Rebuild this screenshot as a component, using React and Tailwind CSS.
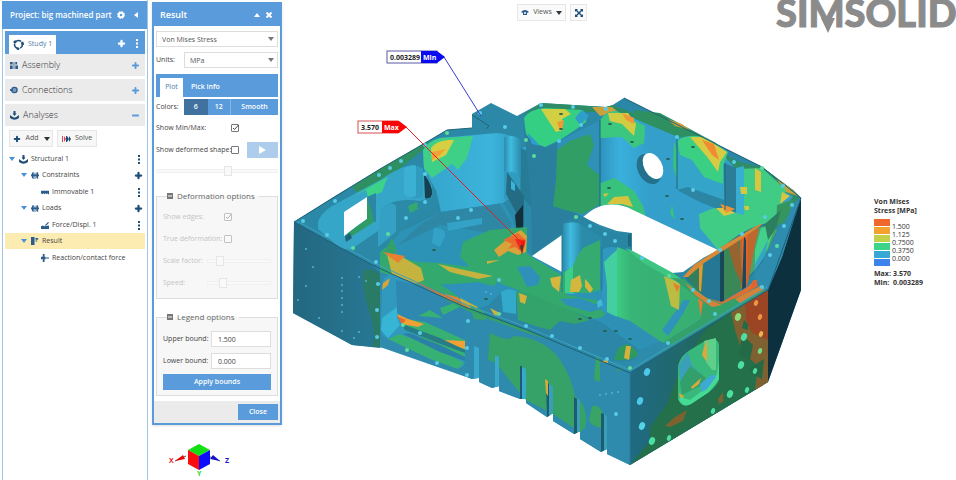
import { Plus, Minus } from "lucide-react";

// [fill, path] pairs, painted back to front
const body = [
  ["#2b88a6", "M294 222L335 196L380 169L425 143L447 130L472 128V114L491 103L517 116L541 103L606 107L613 105L624 98L762 167L793 190L801 198V290L768 382L630 465L607 454V449L601 452L580 439V431L574 434L553 421V413L547 417L526 403V398L520 399L499 391V386L492 388L479 382V377L472 379L388 346V348L352 345L293 313Z"],
  ["url(#leftWall)", "M294 222L370 264L380 272V348L352 345L293 313Z"],
  ["#2a7b66", "M363 271Q370 267 380 274V347H373Q376 328 369 311Q362 290 363 271Z"],
  ["#2e8bae", "M380 270L465 308L527 330L630 373V465L607 454V449L601 452L580 439V431L574 434L553 421V413L547 417L526 403V398L520 399L499 391V386L492 388L479 382V377L472 379L380 347Z"],
  ["#0d303e", "M768 290L782 257L801 198V290L768 382Z"],
  // rim bands
  ["#2e9060", "M352 187L380 169L425 143L432 141L420 152L398 170L372 190L360 196Z"],
  ["#2e8d66", "M606 107L613 105L640 108L700 137L762 167L793 190L800 197L795 203L755 180L730 168H700L678 137L640 118L608 112H560L541 107L519 117L541 103Z"],
  ["#2b87a8", "M624 98L762 167L740 162L700 143L660 123L613 105Z"],
  ["#2e9060", "M634 110L660 113L716 143L728 158L700 146L650 127L634 118Z"],
  ["#c9a13a", "M592 107H612L618 112L600 116ZM667 119L682 124L690 130L675 126ZM775 177L790 188L798 196L786 192Z"],
];

const leftPocket = [
  ["#36a6c8", "M318 222Q320 214 332 206L380 180Q402 165 415 165Q425 170 432 186L436 198L412 208L350 250L340 248L318 229Z"],
  ["#3cd287", "M355 195L380 181L388 177L386 181L382 192L368 198L366 190Z"],
  ["#2f9bbd", "M404 168Q416 163 423 169V197Q414 200 404 194Z"],
  ["#3bb0d2", "M404 168Q412 164 416 166V196Q408 199 404 194Z"],
  ["#16404f", "M424 174Q433 186 432 194Q431 200 425 198Z"],
  ["#2a8aa8", "M432 172L441 192L438 205L413 222L392 240L381 247L372 242L382 228V208Q396 197 420 201L432 197Z"],
  ["#34a1c4", "M381 208Q392 200 396 206V232L378 247V232Z"],
  ["#fff", "M344 212L367 197V219L357 226L344 236Z"],
  ["#2b87a4", "M367 197L376 193V222L367 220Z"],
  ["#2f9c66", "M367 198L371 210L374 222L360 231L345 240L348 233L367 219Z"],
  ["#1f6478", "M345 236L350 233L352 238L346 242Z"],
  ["#35a870", "M408 206L417 202L418 209L410 213Z"],
];

const mainPocket = [
  ["url(#pocket)", "M423 152Q426 141 440 138L497 133Q515 135 520 142V190L503 203L441 212L436 190L424 170Z"],
  ["#3fd088", "M423 150Q427 142 440 138L473 136L467 158L458 170L452 164L432 178L424 168Z"],
  ["#d7cf42", "M431 148Q436 141 448 140L454 140L446 155L432 162Z"],
  ["#f3a034", "M432 152L446 149L440 155L432 160Z"],
  ["url(#column)", "M504 137Q514 134 521 140V178L514 172L504 171Z"],
  ["#2f9bbf", "M504 171L520 177V202L504 199Z"],
  ["#267c97", "M521 149L531 152V207L521 195Z"],
  ["#32a9cf", "M530 159L541 158V166L531 167ZM522 148L532 144L540 147L530 152Z"],
  ["#236c84", "M507 172L524 196V223L520 246L517 214L506 194Z"],
  ["#132f3a", "M515 215L523 205V248L518 246Z"],
  ["#3bb3d8", "M511 180L515 184V191L511 189ZM498 212L505 216V226L496 223Z"],
];

const floor = [
  ["#2d93b6", "M441 212L503 203L510 214L522 247L532 256L562 272L600 290L650 320L663 343L637 350L603 323L520 293L480 308L383 253L400 232Z"],
  ["#2f87a6", "M441 212L500 204L512 224L507 236L440 225L397 246L420 225Z"],
  ["#34a2c6", "M447 223L482 218V224L448 231ZM434 228Q446 228 445 236L440 247L432 243Z"],
  ["#34a96e", "M380 252L393 242L396 256L417 262L440 263L470 267L460 257L463 242L490 230L527 227V254L553 270L562 275L567 295L600 301L632 323L606 317L580 320L547 303L523 292L497 282L493 287L440 284L470 304L430 288L380 272Z"],
  ["#2f91ba", "M443 285L478 282L497 287L492 299L465 302ZM517 267L530 266L540 277L538 285L527 287ZM560 299L580 298L606 308L590 312L566 305Z"],
  ["#33a06c", "M384 252L392 238L397 250L393 257Z"],
  ["#c5b33f", "M387 254L399 255L421 268L424 280L413 285L392 275ZM438 264L460 269L493 276L478 279L450 272Z"],
  ["#e98031", "M383 252L405 256L398 263ZM410 281L438 293L470 308L462 308L430 294ZM440 293L457 297L465 303L445 298Z"],
  ["#c8b13e", "M460 298L478 307L475 310L462 305ZM487 261L500 260L487 264Z"],
  ["#d7a33a", "M494 250L512 235L521 230L527 236L526 252L518 255L508 251L499 257Z"],
  ["#eb6d2d", "M503 240L518 233L526 240L523 253L515 247L508 249L512 244Z"],
  ["#ef2b1d", "M515 239L525 240L524 247L520 250Z"],
  ["#5e3328", "M520 246L524 243L522 255Z"],
];

const backWalls = [
  ["#2a7f9f", "M524 128L545 148L600 120V206L583 217L532 256L531 200Z"],
  ["#2f90b8", "M557 142L600 120V206L583 217L560 205Z"],
  ["#35cf84", "M524 118Q530 109 545 108L582 110Q588 113 586 122L575 130L560 140L545 147L534 143L526 134Z"],
  ["#2d9fca", "M582 110L589 116L580 125L575 118ZM527 132L534 139L540 146L532 144Z"],
  ["#d2cf42", "M541 109L565 109L571 114L562 119L563 130L556 132L548 120Z"],
  ["#f09a34", "M557 122L564 120L562 131L559 128Z"],
  ["#319e65", "M557 150L570 141L590 134L594 145L587 165L599 175V205L583 214L565 210L553 206L556 180Z"],
  ["url(#backWall)", "M600 120Q604 112 616 111L678 137L726 158L735 168L793 196L775 224L718 250L623 205L600 206Z"],
  ["#3bc780", "M600 121Q604 112 616 111L645 126L644 143L634 148L622 137L600 138Z"],
  ["#d2cc42", "M608 113L628 113L636 124L634 136L622 124L610 121Z"],
  ["#ee9a34", "M622 113L634 118V124L626 120Z"],
  ["#38c27c", "M600 183L615 178L634 191L643 206L646 218L623 205L600 207Z"],
  ["#d5c33f", "M607 204L614 197L628 196L633 207L622 204ZM603 194L609 193L605 197Z"],
  // right alcove
  ["#34a4c9", "M677 139Q688 134 704 137L725 150V206L688 187L677 190Z"],
  ["#3bcf84", "M677 141Q687 134 703 137L728 152L723 166V184L704 177L692 160L680 155Z"],
  ["#d6cb42", "M690 137H703L727 152L720 162L718 172L708 158Z"],
  ["#f18b31", "M702 140L714 144L719 160L712 155Z"],
  ["#2b85a3", "M677 190L688 187L724 200V212L700 202Z"],
  ["#2b7e99", "M724 163L736 168V212L725 210Z"],
  ["#40cc85", "M736 169L762 168L786 190L781 210L765 224L736 242L718 250L700 228L699 214L714 208L736 213Z"],
  ["#38aed2", "M736 168L744 166V215L736 213Z"],
  ["#d6c640", "M755 168L761 172V192L755 190ZM740 187H747V194H741ZM744 206H749V210H745ZM716 208L726 208L735 213L724 216ZM782 192L790 196L780 204Z"],
  ["#ee9434", "M720 204L727 206L735 209L726 213Z"],
  ["#38c27c", "M674 142L677 150V180L673 166ZM672 205L675 220L670 213Z"],
];

const front = [
  ["#fff", "M583 217Q596 206 605 205Q620 203 633 210L718 250L703 258L683 272L672 273L632 252V233L617 231L600 225Z"],
  ["#fff", "M532 256L562 235V272Z"],
  ["#2986a3", "M562 224L577 215L584 217L600 228L615 234L631 233V247L625 249L617 252L605 256L600 290H583L562 230Z"],
  ["#1f6880", "M628 235L631 233V247L628 246Z"],
  ["url(#column)", "M563 224Q575 220 582 225V292Q572 296 563 292Z"],
  ["#2b8ca9", "M582 225L602 238V290H582Z"],
  ["#36ab70", "M563 272L572 268L578 255L583 248L600 240V290L590 293L563 293Z"],
  ["#3fce86", "M565 272L573 266V293H565Z"],
  ["#2f97c0", "M602 250Q608 245 618 248V317L602 312Z"],
  ["#43cfa0", "M604 262L611 255L617 250V317L607 312V285Z"],
  ["url(#greenWall)", "M617 247Q632 252 642 258L672 276L690 286L707 297L711 313L663 343L630 323L617 316Z"],
  ["#3ec581", "M625 248L631 250L673 273L710 300L690 290L642 262Z"],
  ["#2f90b6", "M606 313L630 321L663 343L650 348L620 330L601 318Z"],
  ["#2f93ba", "M662 330L684 300L690 300L683 314L668 336Z"],
  ["#bdbc42", "M664 276L680 283L679 310L671 306Z"],
  ["#d5b63f", "M550 278L561 276L559 292L552 286ZM571 280L580 275L582 286L579 292H570ZM585 279L588 282L593 289L590 293L585 287Z"],
  ["#e97d2e", "M673 283L680 286L677 292ZM698 297L709 304L708 314L701 319Z"],
  ["#41b9dc", "M597 302L601 299L603 305L598 308Z"],
  // cavity with ribs
  ["#257794", "M685 280Q690 268 703 261L737 236Q760 222 773 223Q779 228 773 240L762 262L752 275L720 302L707 299Z"],
  ["#48a36a", "M753 230Q772 221 777 230L768 250L753 272L740 285V240Z"],
  ["#c0672d", "M737 238L759 228L755 245L748 283L739 290Z"],
  ["#e7612a", "M742 237L748 234L747 286L742 290Z"],
  ["#43cf8c", "M761 228L775 226L767 250L755 268V250Z"],
  ["#35a5c4", "M756 262L768 240L765 256L754 272Z"],
  ["#3b8856", "M724 248L740 239L741 290L724 300Z"],
  ["#98632f", "M728 246L738 238L743 286L735 270Z"],
  ["#327f5b", "M687 277L704 263L702 294L697 290Z"],
  ["#e39a36", "M699 266L703 263L701 292L699 290Z"],
  ["#18495a", "M720 252L724 249V301L720 302ZM744 236L746 240V287L742 290Z"],
  ["#dd6f33", "M706 298L722 302L746 288L755 280L758 286L738 298L718 306Z"],
  ["#d98a36", "M683 277L694 265L726 244L758 225L763 224L740 240L704 263L688 277Z"],
  // rim of the right side
  ["#34a16b", "M685 279L703 296L722 304L758 288L766 290L640 365L614 372L637 358L663 343L700 320L703 302L672 278Z"],
  ["#d5833a", "M685 283L708 299L722 305L712 307L695 295ZM735 299L762 285L764 290L740 303Z"],
  ["#2d8bab", "M637 350L660 342L672 345L630 372L603 362L620 362L637 358Z"],
  ["#2e8daf", "M773 240L791 204L800 199L782 257L768 289L758 284L753 275L763 262Z"],
  ["#35955e", "M777 205L795 199L785 222L776 226Z"],
  ["#2b7f5c", "M765 224L781 210L776 228L768 240Z"],
  ["#e4622c", "M753 280L757 280L757 286L750 290Z"],
];

const trough = [
  ["#2b86a8", "M487 308Q495 296 507 290L520 292L603 323L637 348Q640 358 630 361L612 361L553 338L520 327L497 316Z"],
  ["#33aacb", "M501 292Q508 287 516 291V314L503 312Z"],
  ["#34a36b", "M516 291L523 292L540 298L570 310L590 320L575 324L560 321L550 330L535 326L518 320Z"],
  ["#2f9a60", "M618 348L626 344Q640 350 637 356Q632 361 614 360Z"],
  ["#d4b03d", "M519 293L527 296L525 304L520 302ZM626 346L631 346L629 360L624 358ZM490 308L502 314L495 316Z"],
];

const frontWindow = [
  ["#3199bd", "M382 285Q383 276 391 274L420 285L465 308V362Q463 370 456 367L388 339Q381 336 381 328Z"],
  ["#2e88b0", "M396 280L419 286L465 308V345L410 328L397 312Z"],
  ["#37b5d4", "M382 318L397 307V318L400 325L388 338L381 330Z"],
  ["#d8a43a", "M383 283L390 278L388 285L382 290Z"],
  ["#37b073", "M400 318L425 322L465 340V357L440 349L403 326ZM388 339L400 334L440 350L464 363L458 369L430 359ZM440 308L457 302L462 306L443 315ZM418 316L430 310L443 318Z"],
  ["#f0a035", "M397 314L408 319L424 324L418 327L402 324ZM444 340L465 341V349L450 344Z"],
  ["#e96b2c", "M397 316L406 320L402 324Z"],
  ["#277d86", "M402 324L440 338L465 350V353L438 343L405 330Z"],
  ["#2a80a6", "M409 333L440 345L465 357V361L440 352L403 334Z"],
  ["#36a267", "M490 333L497 336Q508 342 514 336Q545 338 560 360Q572 378 575 396Q590 408 585 428L580 432L553 414L526 400L507 377L496 363L488 360Z"],
  ["#38a567", "M592 406Q600 404 603 414L601 428Q591 426 589 420ZM596 356L600 360V382L594 380ZM470 305L484 311L486 320L474 319Z"],
  ["#35a169", "M440 297L527 330L553 341L527 333L470 312Z"],
];

const rightFace = [
  ["url(#rightFace)", "M630 373L768 290V382L630 465Z"],
  ["#24704a", "M650 427L667 404L680 370L706 329L768 290V382L630 465L650 441Z"],
  ["#7f6030", "M731 312L768 290V382L755 390L758 366L742 352L735 330Z"],
  ["#9c4524", "M745 304L768 290V340L752 333L746 320Z"],
  ["#7d6230", "M665 426L675 417L687 410L683 421L670 427ZM718 399L723 392V402L719 404Z"],
  ["#246a46", "M742 334L753 345L750 360L739 355ZM744 320L748 324V330L742 328ZM750 368L764 359L762 379L752 374Z"],
  ["#39b87b", "M678 366Q680 356 690 350L705 341Q718 336 719 345V379Q718 385 709 392L691 404Q682 409 678 399Z"],
  ["#3a9fb8", "M679 365L688 352L692 366L706 378L690 386L680 380Z"],
  ["#33a06c", "M690 366L706 378L700 386L682 395L680 382Z"],
  ["#5fd08a", "M704 341L716 338V370L712 370L706 362Z"],
  ["#dba93a", "M704 347L707 340V362L702 355ZM691 387L701 378L699 384L692 389ZM679 393L684 396L681 402Z"],
  ["#46db95", "M680 397L690 400L706 388L717 374L719 360V379L709 392L691 404Q683 408 679 400Z"],
  ["#3fa9d6", "M700 384L713 374L716 377L707 389L702 392Z"],
];

// x, y of the light screw holes along the rims
const screws = [
  [303, 221], [327, 235], [335, 201], [353, 248], [376, 262], [379, 175], [401, 161], [390, 168], [388, 234], [406, 218], [425, 145], [425, 174], [425, 202], [447, 133], [458, 218], [471, 210], [480, 113], [505, 127], [526, 140], [541, 105], [559, 141], [573, 107], [581, 125], [534, 156], [606, 109], [677, 137], [693, 190], [734, 162], [762, 168], [783, 186], [792, 205], [765, 217], [784, 226], [777, 246], [770, 255], [742, 234], [720, 250], [762, 287], [576, 217], [590, 226], [605, 234], [615, 241], [642, 258], [669, 276], [693, 290], [709, 301], [715, 314], [668, 343], [630, 368], [607, 359], [580, 348], [552, 336], [526, 326], [499, 314], [499, 280], [378, 284], [377, 310], [377, 337], [407, 350], [437, 363], [467, 375], [468, 321], [467, 348], [403, 325], [420, 333], [616, 414],
];

const bolts = [
  [647, 372, 3, "#4cc9e8"], [640, 401, 3, "#4cc9e8"], [642, 426, 3, "#54d2e6"], [652, 441, 3, "#4be0a2"], [669, 438, 2, "#4be0a2"], [713, 411, 2, "#4be0a2"], [730, 394, 3, "#4be0a2"], [747, 390, 2, "#4be0a2"], [741, 365, 3, "#4be0a2"], [744, 337, 3, "#4be0a2"], [738, 317, 3, "#8fdc79"], [756, 303, 2, "#f09545"], [760, 317, 2, "#f09545"], [761, 334, 2, "#e8b64c"], [760, 351, 2, "#6fdc8b"], [755, 371, 2, "#4be0a2"],
];

const dots = [
  [342, 278], [342, 285], [342, 291], [342, 298], [342, 305], [342, 312], [306, 249], [313, 267], [306, 286], [298, 300], [319, 318], [342, 331], [354, 338], [359, 332], [359, 277], [366, 281], [486, 292], [491, 294], [600, 395], [606, 394], [612, 393], [618, 392],
];

const darkHoles = [
  [561, 114], [561, 129], [610, 124], [632, 142], [693, 147], [668, 159], [609, 188], [667, 196], [682, 219], [605, 331], [616, 331], [590, 318], [580, 319], [630, 339], [434, 250], [486, 299],
];

const legend = [
  ["#f0672d", "1.500"],
  ["#f4a22f", "1.125"],
  ["#c3d04a", "0.7500"],
  ["#3bd48a", "0.3750"],
  ["#35a9d3", "0.000"],
  ["#3d83ee", ""],
];

function Shapes({ items }) {
  return items.map(([fill, d], i) => <path key={i} fill={fill} d={d} />);
}

function Model() {
  return (
    <svg viewBox="282 40 578 440" className="block min-w-0 flex-1" role="img" aria-label="Von Mises stress plot">
      <defs>
        <linearGradient id="leftWall" x1="0" x2="1">
          <stop offset="0" stopColor="#236780" />
          <stop offset="1" stopColor="#277895" />
        </linearGradient>
        <linearGradient id="pocket" x1="0" x2="1">
          <stop offset="0" stopColor="#35a5cb" />
          <stop offset="0.7" stopColor="#3cb4dc" />
          <stop offset="1" stopColor="#2e98bd" />
        </linearGradient>
        <linearGradient id="column" x1="0" x2="1">
          <stop offset="0" stopColor="#2c8cae" />
          <stop offset="0.4" stopColor="#40bce0" />
          <stop offset="1" stopColor="#2b8bac" />
        </linearGradient>
        <linearGradient id="backWall" x1="0" x2="1">
          <stop offset="0" stopColor="#2d92bd" />
          <stop offset="0.1" stopColor="#3ab0dc" />
          <stop offset="0.25" stopColor="#349fcb" />
          <stop offset="1" stopColor="#349fc9" />
        </linearGradient>
        <linearGradient id="greenWall" x1="0" x2="1">
          <stop offset="0" stopColor="#3ccc82" />
          <stop offset="0.15" stopColor="#38b476" />
          <stop offset="1" stopColor="#38ae70" />
        </linearGradient>
        <linearGradient id="rightFace" x1="0" x2="1">
          <stop offset="0" stopColor="#206a84" />
          <stop offset="1" stopColor="#21653f" />
        </linearGradient>
      </defs>
      <Shapes items={body} />
      <Shapes items={leftPocket} />
      <Shapes items={mainPocket} />
      <Shapes items={backWalls} />
      <Shapes items={floor} />
      <Shapes items={front} />
      <Shapes items={trough} />
      <Shapes items={frontWindow} />
      <Shapes items={rightFace} />

      {/* round hole in the back wall */}
      <ellipse cx="649" cy="169" rx="11" ry="16" transform="rotate(-28 649 169)" fill="#23718c" />
      <ellipse cx="653" cy="166" rx="9" ry="14" transform="rotate(-28 653 166)" fill="#fff" />

      {/* slots at the foot of the front wall */}
      <path fill="#38a9cc" d="M474 346L479 348V378L474 379ZM495 355L499 357V386L495 387ZM522 367L526 369V399L522 399Z" />
      <path fill="#1b5c70" d="M520 366H522V399L520 399ZM546 382L549 384V416L547 417ZM574 397L577 399V433L574 434ZM601 413L604 414V450L601 452Z" />
      <path fill="#3a9fb5" d="M549 384L553 386V413L549 416ZM577 399L580 400V431L577 433ZM604 414L607 416V449L604 450Z" />
      <path fill="#d9aa39" d="M545 379L548 381V396L546 393ZM601 362L608 358V363Z" />

      <g fill="none" strokeWidth="1">
        <path stroke="#1f6076" d="M294 222L370 264L465 307L527 330L630 373L768 290L801 198" />
        <path stroke="#3ea1bf" d="M297 221L372 262L467 305L529 328L630 370L767 287" />
        <path stroke="#d0702f" d="M418 283L470 308" />
        <path stroke="#1f6478" d="M600 120V206M725 163V210M677 139V189M294 222L380 169L425 143L447 130L472 128M624 98L762 167L801 198M472 115L489 126L486 129" />
        <path stroke="#2a7b93" d="M562 225V292M602 246V290M630 373V465" />
      </g>

      {screws.map(([x, y], i) => <circle key={i} cx={x} cy={y} r="2" fill={i % 5 === 3 ? "#5fdc9c" : "#58cbe8"} />)}
      {darkHoles.map(([x, y], i) => <ellipse key={i} cx={x} cy={y} rx="2" ry="1" fill="#25604f" />)}
      {dots.map(([x, y], i) => <circle key={i} cx={x} cy={y} r="1" fill="#4fb3cf" />)}
      {bolts.map(([x, y, r, fill], i) => <ellipse key={i} cx={x} cy={y} rx={r} ry={r + 1} fill={fill} transform={`rotate(20 ${x} ${y})`} />)}

      {/* min / max flags */}
      <path d="M444 57L481 116" fill="none" stroke="#3c3cd0" strokeWidth="1" />
      <path d="M406 127L523 244" fill="none" stroke="#e81c24" strokeWidth="1" />
      <circle cx="523" cy="243" r="2" fill="#ff1010" />
      <rect x="387" y="51" width="50" height="12" fill="#fff" stroke="#5a5aa8" />
      <path d="M421 51H437L445 57L437 63H421Z" fill="#0a0af0" />
      <rect x="358" y="121" width="40" height="12" fill="#fff" stroke="#d85050" />
      <path d="M382 121H399L407 127L399 133H382Z" fill="#fa0505" />
      <g className="font-['Open_Sans'] text-[7px] font-bold">
        <text x="390" y="60" fill="#222">0.003289</text>
        <text x="423" y="60" fill="#fff">Min</text>
        <text x="361" y="130" fill="#222">3.570</text>
        <text x="384" y="130" fill="#fff">Max</text>
      </g>
    </svg>
  );
}

function Caret({ className = "" }) {
  return (
    <svg viewBox="0 0 6 4" className={`h-1 w-1.5 shrink-0 ${className}`} fill="currentColor" aria-hidden="true">
      <path d="M0 0H6L3 4Z" />
    </svg>
  );
}

function Dots() {
  return (
    <svg viewBox="0 0 9 9" className="size-[9px] shrink-0" fill="currentColor" aria-hidden="true">
      <path d="M4 0H6V2H4ZM4 3.500H6V5.500H4ZM4 7H6V9H4Z" />
    </svg>
  );
}

function Gear() {
  return (
    <svg viewBox="0 0 8 8" className="size-2" fill="none" stroke="currentColor" aria-hidden="true">
      <circle cx="4" cy="4" r="2.300" strokeWidth="2" />
      <circle cx="4" cy="4" r="3.500" strokeWidth="1" strokeDasharray="1.400 1.350" />
    </svg>
  );
}

function Anchor() {
  return (
    <svg viewBox="0 0 9 9" className="size-[9px] shrink-0 text-[#1f4e79]" fill="currentColor" aria-hidden="true">
      <path d="M3.500 0H5.500V2.500H6.500L4.500 5L2.500 2.500H3.500ZM0 4L2 5.500Q4.500 7.500 7 5.500L9 4V7Q4.500 10.500 0 7Z" />
    </svg>
  );
}

const glyphs = {
  assembly: "M0 1H3V4H0ZM0 5H3V9H0ZM4 1H5V9H4ZM6 1H8V4H6ZM6 5H9V9H6Z",
  group: "M1 2L3 1V9L1 8ZM4 2H5V9H4ZM6 2L8 1V9L6 8ZM0 4H9V6H0Z",
  immovable: "M0 3H9V7H8L7 6L6 7L5 6L4 7L3 6L2 7L1 6L0 7Z",
  force: "M0 6L2 5L4 6L9 5V9H0ZM4 5L8 1L9 2L6 5Z",
  result: "M0 0H4V9H0ZM5 1H8V3H5ZM5 4H7V5H5Z",
  reaction: "M2 0H4V3H5V4H9V5H5V6H4V9H2V6H0V3H2Z",
};

function Glyph({ name }) {
  return (
    <svg viewBox="0 0 9 9" className="size-2 shrink-0 text-[#2b5d8c]" fill="currentColor" aria-hidden="true">
      <path d={glyphs[name]} />
    </svg>
  );
}

function Section({ icon, title, open }) {
  const Sign = open ? Minus : Plus;
  return (
    <button type="button" aria-expanded={!!open} className="flex h-[22px] w-full items-center gap-1 bg-[#ebebeb] pl-[5px] pr-1 text-[9px] font-light text-[#333]">
      {icon}
      <span className="flex-1 text-left">{title}</span>
      <Sign className="mr-px size-[9px] text-[#5a9bdb]" strokeWidth={5} />
    </button>
  );
}

function TreeRow({ level = 0, icon, label, caret, action, active }) {
  const indent = ["pl-1", "pl-4", "pl-9"][level];
  return (
    <div className={`flex h-4 items-center pr-0.5 ${indent} ${active ? "bg-[#fdecb2]" : ""}`}>
      {caret && <Caret className="mr-1 text-[#4a90d9]" />}
      {icon}
      <span className="ml-[3px] flex-1 whitespace-nowrap">{label}</span>
      {action && (
        <button type="button" aria-label={`${label} menu`} className="text-[#1f4e79]">
          {action === "add" ? <Plus className="size-[9px]" strokeWidth={6} /> : <Dots />}
        </button>
      )}
    </div>
  );
}

function Sidebar() {
  return (
    <aside className="flex min-h-screen w-[148px] shrink-0 flex-col border-r border-[#9cc6e8] pl-0.5 pt-px">
      <header className="flex h-7 items-center bg-[#5a9bdb] pl-2 pr-2 text-white">
        <h1 className="flex-1 whitespace-nowrap text-[8px] font-semibold">Project: big machined part</h1>
        <button type="button" aria-label="Settings" className="mr-2"><Gear /></button>
        <button type="button" aria-label="Collapse"><Caret className="rotate-90" /></button>
      </header>
      <div className="flex flex-1 flex-col border-l border-[#9cc6e8] px-0.5 pt-0.5">
        <div className="flex h-[23px] items-end bg-[#5a9bdb] pl-1 pr-0.5 text-white">
          <button type="button" className="flex h-[19px] items-center gap-1 bg-white px-1 text-[7px] text-[#4f7ea8]">
            <svg viewBox="0 0 11 11" className="size-[11px]" fill="none" stroke="#1f4e79" strokeWidth="1.500" aria-hidden="true">
              <circle cx="5.500" cy="5.500" r="4" strokeDasharray="5.400 3" strokeDashoffset="1" />
              <path d="M1 4L3 2M10 6L9 3M4 9L6 10.500" strokeWidth="2.500" />
            </svg>
            Study 1
          </button>
          <span className="flex-1" />
          <button type="button" aria-label="Add study" className="mb-1.5 mr-1.5"><Plus className="size-[9px]" strokeWidth={6} /></button>
          <button type="button" aria-label="Study menu" className="mb-1.5 mr-0.5"><Dots /></button>
        </div>
        <div className="flex flex-col gap-[3px]">
          <Section title="Assembly" icon={<Glyph name="assembly" />} />
          <Section
            title="Connections"
            icon={
              <svg viewBox="0 0 9 9" className="size-2 shrink-0" aria-hidden="true">
                <circle cx="5" cy="4.500" r="3" fill="#7d9cc0" stroke="#2b5d8c" strokeWidth="1.500" />
                <path d="M0 4.500H3" stroke="#2b5d8c" strokeWidth="2" />
              </svg>
            }
          />
          <Section title="Analyses" icon={<Anchor />} open />
        </div>
        <div className="mb-1 mt-1 flex gap-1 pl-1 text-[7px] text-[#555]">
          <button type="button" className="flex h-[17px] w-11 items-center justify-center gap-[5px] border border-[#e6e6e6] bg-[#f7f7f7]">
            <Plus className="size-2 text-[#1f4e79]" strokeWidth={6} />
            Add
            <Caret className="text-[#333]" />
          </button>
          <button type="button" className="flex h-[17px] w-10 items-center justify-center gap-1 border border-[#e6e6e6] bg-[#f7f7f7]">
            <svg viewBox="0 0 9 8" className="h-2 w-[9px]" aria-hidden="true">
              <path d="M0 1H1V7H0ZM2 1L4 4L2 7Z" fill="#e0405a" />
              <path d="M4 1H5L7 4L5 7H4ZM7 1L9 4L7 7Z" fill="#1f4e79" />
            </svg>
            Solve
          </button>
        </div>
        <nav className="text-[7px] text-[#444]">
          <TreeRow caret icon={<Anchor />} label="Structural 1" action="menu" />
          <TreeRow level={1} caret icon={<Glyph name="group" />} label="Constraints" action="add" />
          <div className="pt-px"><TreeRow level={2} icon={<Glyph name="immovable" />} label="Immovable 1" action="menu" /></div>
          <TreeRow level={1} caret icon={<Glyph name="group" />} label="Loads" action="add" />
          <div className="pt-px"><TreeRow level={2} icon={<Glyph name="force" />} label="Force/Displ. 1" action="menu" /></div>
          <TreeRow level={1} caret icon={<Glyph name="result" />} label="Result" active />
          <div className="pt-px"><TreeRow level={2} icon={<Glyph name="reaction" />} label="Reaction/contact force" /></div>
        </nav>
      </div>
    </aside>
  );
}

function Select({ label, children, className = "" }) {
  return (
    <div className={`relative ${className}`}>
      <select aria-label={label} className="h-4 w-full appearance-none border border-[#ddd] bg-white pl-[5px] text-[7px] leading-none text-[#555]">
        {children}
      </select>
      <Caret className="absolute right-1 top-1.5 text-[#777]" />
    </div>
  );
}

function Check({ id, checked, disabled }) {
  return (
    <span className={`relative inline-flex size-2 ${disabled ? "opacity-40" : ""}`}>
      <input id={id} type="checkbox" defaultChecked={checked} disabled={disabled} className="peer size-2 appearance-none rounded-[1px] border border-[#777] bg-white" />
      <svg viewBox="0 0 8 8" className="pointer-events-none absolute inset-0 hidden size-2 peer-checked:block" fill="none" stroke="#444" aria-hidden="true">
        <path d="M2 4L3.500 5.500L7.500 1" />
      </svg>
    </span>
  );
}

function Slider({ id, label, value }) {
  return (
    <input
      id={id}
      aria-label={label}
      type="range"
      defaultValue={value}
      disabled
      className="h-1 w-full min-w-0 appearance-none rounded-[1px] border border-[#f0f0f0] bg-[#f9f9f9] [&::-webkit-slider-thumb]:h-2.5 [&::-webkit-slider-thumb]:w-2 [&::-webkit-slider-thumb]:appearance-none [&::-webkit-slider-thumb]:border [&::-webkit-slider-thumb]:border-[#e6e6e6] [&::-webkit-slider-thumb]:bg-[#f9f9f9]"
    />
  );
}

function Legend({ children }) {
  return (
    <legend className="ml-1 flex items-center gap-1 whitespace-nowrap pr-1 text-[8px] leading-3 text-[#666]">
      <svg viewBox="0 0 6 6" className="size-1.5" aria-hidden="true">
        <path d="M0 0H6V6H0Z" fill="#777" />
        <path d="M1 3H5" stroke="#fff" />
      </svg>
      {children}
    </legend>
  );
}

function ResultDialog() {
  return (
    <section className="flex flex-col border-2 border-[#5a9bdb] bg-white text-[7px] text-[#444] shadow-sm">
      <header className="flex h-[22px] items-center bg-[#5a9bdb] pl-1.5 pr-2 text-white">
        <h2 className="flex-1 text-[9px] font-semibold">Result</h2>
        <button type="button" aria-label="Minimize" className="mr-1.5"><Caret className="rotate-180" /></button>
        <button type="button" aria-label="Close dialog">
          <svg viewBox="0 0 6 6" className="size-1.5" stroke="currentColor" strokeWidth="2"><path d="M0.500 0.500L5.500 5.500M5.500 0.500L0.500 5.500" /></svg>
        </button>
      </header>
      <div className="flex flex-col px-0.5 pt-[5px]">
        <Select label="Result type"><option>Von Mises Stress</option></Select>
        <div className="mt-[5px] flex items-center">
          <span className="w-7 shrink-0">Units:</span>
          <Select label="Units" className="flex-1"><option>MPa</option></Select>
        </div>
        <div className="mt-1.5 flex h-[23px] items-end bg-[#5a9bdb] pl-1">
          <button type="button" className="h-[19px] w-[23px] bg-white text-[#4f7ea8]">Plot</button>
          <button type="button" className="h-[19px] px-2 font-semibold text-white">Pick info</button>
        </div>
        <div className="mt-0.5 flex h-4 items-center">
          <span className="w-7 shrink-0">Colors:</span>
          <div className="grid h-full flex-1 grid-cols-4 font-semibold text-white">
            <button type="button" className="bg-[#41729f]">6</button>
            <button type="button" className="border-r border-[#84b5e4] bg-[#5a9bdb]">12</button>
            <button type="button" className="col-span-2 bg-[#5a9bdb]">Smooth</button>
          </div>
        </div>
        <div className="mt-1 flex h-[18px] items-center">
          <label htmlFor="minmax" className="w-[75px]">Show Min/Max:</label>
          <Check id="minmax" checked />
        </div>
        <div className="mt-1 flex h-[18px] items-center whitespace-nowrap">
          <label htmlFor="deformed" className="w-[75px]">Show deformed shape:</label>
          <Check id="deformed" />
          <button type="button" aria-label="Play" disabled className="ml-auto flex h-4 w-[31px] items-center justify-center bg-[#aecdec] text-white">
            <svg viewBox="0 0 7 8" className="h-2 w-[7px]" fill="currentColor"><path d="M0 0L7 4L0 8Z" /></svg>
          </button>
        </div>
        <div className="mb-2.5 mt-[3px] flex h-[18px] items-center">
          <Slider label="Deformation position" value={60} />
        </div>
        <fieldset className="min-w-0 border border-[#ddd] bg-[#f7f7f7] px-1.5 pb-1 text-[#c4c4c4]">
          <Legend>Deformation options</Legend>
          <div className="mt-1 flex h-[22px] items-center">
            <label htmlFor="edges" className="w-[61px]">Show edges:</label>
            <Check id="edges" checked disabled />
          </div>
          <div className="flex h-[22px] items-center">
            <label htmlFor="truedef" className="w-[61px] whitespace-nowrap">True deformation:</label>
            <Check id="truedef" disabled />
          </div>
          <div className="flex h-[22px] items-center">
            <label htmlFor="scale" className="w-11 shrink-0 whitespace-nowrap">Scale factor:</label>
            <Slider id="scale" value={14} />
          </div>
          <div className="flex h-[22px] items-center">
            <label htmlFor="speed" className="w-11 shrink-0">Speed:</label>
            <Slider id="speed" value={20} />
          </div>
        </fieldset>
        <fieldset className="mt-3 min-w-0 border border-[#ddd] bg-[#f7f7f7] px-1.5 pb-[5px]">
          <Legend>Legend options</Legend>
          <div className="mt-2 flex items-center">
            <label htmlFor="upper" className="w-12 shrink-0 whitespace-nowrap">Upper bound:</label>
            <input id="upper" defaultValue="1.500" className="h-4 w-full min-w-0 border border-[#ddd] bg-white pl-1.5" />
          </div>
          <div className="mt-1.5 flex items-center">
            <label htmlFor="lower" className="w-12 shrink-0 whitespace-nowrap">Lower bound:</label>
            <input id="lower" defaultValue="0.000" className="h-4 w-full min-w-0 border border-[#ddd] bg-white pl-1.5" />
          </div>
          <button type="button" className="mt-[5px] h-4 w-full bg-[#5a9bdb] font-semibold text-white">Apply bounds</button>
        </fieldset>
      </div>
      <footer className="mt-[5px] flex h-[22px] items-center justify-end bg-[#ebebeb] pr-0.5">
        <button type="button" className="h-4 w-10 bg-[#5a9bdb] font-semibold text-white">Close</button>
      </footer>
    </section>
  );
}

function Triad() {
  return (
    <svg viewBox="0 0 66 40" className="ml-4 h-10 w-[66px]" role="img" aria-label="View orientation">
      <path d="M18 17L7 22M40 17L52 22" stroke="#555" />
      <path d="M7 22L15 16L17 20Z" fill="#f00000" />
      <path d="M52 22L42 20L45 16Z" fill="#1010c8" />
      <path d="M31 5L42 11L31 17L20 11Z" fill="#12e012" />
      <path d="M20 11L31 17V31L20 25Z" fill="#fb0d0d" />
      <path d="M42 11L31 17V31L42 25Z" fill="#0d0dfb" />
      <g className="font-['Open_Sans'] text-[7px] font-bold">
        <text x="1" y="24" fill="#e81818">X</text>
        <text x="57" y="24" fill="#1818c8">Z</text>
        <text x="29" y="37" fill="#18d818">Y</text>
      </g>
    </svg>
  );
}

function Logo() {
  return (
    <svg viewBox="0 0 180 36" className="h-9 w-[180px]" role="img" aria-label="SIMSOLID">
      <text x="0" y="27" fill="#8b8b8b" stroke="#8b8b8b" strokeWidth="1" className="font-['Lato'] text-[38px] font-black">SIMSOLID</text>
      <path d="M45 18H59L52 33Z" fill="#8b8b8b" />
    </svg>
  );
}

export default function App() {
  return (
    <div className="flex min-h-screen overflow-hidden bg-white font-['Open_Sans',sans-serif]">
      <Sidebar />
      <div className="flex w-[134px] shrink-0 flex-col gap-3.5 pl-1 pt-0.5">
        <ResultDialog />
        <Triad />
      </div>
      <main className="flex min-w-0 flex-1 flex-col">
        <header className="flex h-10 justify-between">
          <div className="ml-[235px] flex gap-1 pt-1 text-[7px] text-[#555]">
            <button type="button" className="flex h-[17px] w-[49px] items-center justify-center gap-1 border border-[#e6e6e6] bg-[#fafafa]">
              <svg viewBox="0 0 8 6" className="h-1.5 w-2" fill="#2b5d8c" aria-hidden="true">
                <path d="M0 2Q4 -2 8 2L6 3V5H2V3Z" />
                <circle cx="4" cy="3" r="1" fill="#fff" />
              </svg>
              Views
              <Caret className="text-[#333]" />
            </button>
            <button type="button" aria-label="Fit to view" className="flex size-[17px] items-center justify-center border border-[#e6e6e6] bg-[#fafafa]">
              <svg viewBox="0 0 8 8" className="size-2" fill="#1f4e79" aria-hidden="true">
                <path d="M0 0H3L2 1L4 3L6 1L5 0H8V3L7 2L5 4L7 6L8 5V8H5L6 7L4 5L2 7L3 8H0V5L1 6L3 4L1 2L0 3Z" />
              </svg>
            </button>
          </div>
          <Logo />
        </header>
        <div className="flex items-start">
          <Model />
          <aside className="w-24 shrink-0 pl-3.5 pt-[157px] text-[7px] leading-[9px] text-[#333]">
            <h3 className="font-bold">Von Mises<br />Stress [MPa]</h3>
            <ul className="mt-1">
              {legend.map(([color, value]) => (
                <li key={color} className="flex h-2 items-start gap-0.5">
                  <svg viewBox="0 0 16 7" className="h-[7px] w-4"><rect width="16" height="7" fill={color} /></svg>
                  <span className="pt-1 leading-[8px]">{value}</span>
                </li>
              ))}
            </ul>
            <dl className="mt-0.5 grid grid-cols-[19px_1fr] font-bold">
              <dt>Max:</dt><dd>3.570</dd>
              <dt>Min:</dt><dd>0.003289</dd>
            </dl>
          </aside>
        </div>
      </main>
    </div>
  );
}
